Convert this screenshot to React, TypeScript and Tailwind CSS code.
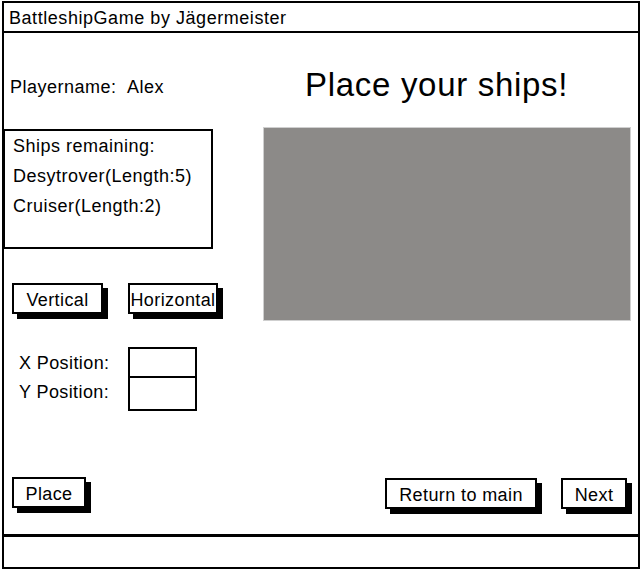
import React from "react";

const font = { fontFamily: '"Liberation Sans", Arial, sans-serif' };

function Btn({ label, w, className = "" }: { label: string; w: string; className?: string }) {
  return (
    <div
      className={`${w} shrink-0 h-[31px] border-2 border-black bg-white shadow-[5px_5px_0_0_#000] flex items-start justify-center pt-[3px] text-[18px] leading-[24px] tracking-[0.4px] text-black whitespace-nowrap ${className}`}
    >
      {label}
    </div>
  );
}

export default function App() {
  return (
    <div className="w-[644px] h-[573px] bg-white text-black" style={font}>
      <div className="ml-[2px] mt-[1px] w-[638px] h-[568px] border-2 border-black flex flex-col">
        {/* title bar */}
        <div className="h-[30px] border-b-2 border-black pl-[5px] pt-[3px] text-[18px] leading-[24px] tracking-[0.55px]">
          BattleshipGame by Jägermeister
        </div>

        {/* content */}
        <div className="flex-1 flex flex-col">
          <div className="flex">
            {/* left column */}
            <div className="w-[209px] shrink-0 flex flex-col">
              <div className="mt-[42px] pl-[6px] flex text-[18px] leading-[24px] tracking-[0.5px]">
                <span className="w-[117px]">Playername:</span>
                <span>Alex</span>
              </div>
              <div className="mt-[30px] -ml-[1px] h-[120px] border-2 border-black pl-[8px] text-[18px] leading-[30px] tracking-[0.5px]">
                <div>Ships remaining:</div>
                <div>Desytrover(Length:5)</div>
                <div>Cruiser(Length:2)</div>
              </div>
              <div className="mt-[34px] ml-[8px] flex gap-[25px]">
                <Btn label="Vertical" w="w-[91px]" />
                <Btn label="Horizontal" w="w-[90px]" />
              </div>
              <div className="mt-[33px] ml-[15px] flex">
                <div className="w-[109px] shrink-0 flex flex-col text-[18px] tracking-[0.4px]">
                  <div className="h-[30px] pt-[4px] leading-[24px]">X Position:</div>
                  <div className="h-[30px] pt-[3px] leading-[24px]">Y Position:</div>
                </div>
                <div className="flex flex-col">
                  <div className="w-[69px] h-[31px] border-2 border-black" />
                  <div className="w-[69px] h-[35px] -mt-[2px] border-2 border-black" />
                </div>
              </div>
            </div>

            {/* right column */}
            <div className="ml-[50px] w-[368px] shrink-0 flex flex-col">
              <div className="mt-[32px] pl-[42px] text-[33px] leading-[40px] tracking-[0.7px]">
                Place your ships!
              </div>
              <div className="mt-[22px] h-[194px] bg-[#8c8a88] border border-[#cfcfcf]" />
            </div>
          </div>

          {/* bottom buttons */}
          <div className="mt-auto mb-[25px] flex items-start">
            <Btn label="Place" w="w-[74px]" className="ml-[8px]" />
            <div className="flex-1" />
            <Btn label="Return to main" w="w-[152px]" className="mt-[1px]" />
            <Btn label="Next" w="w-[66px]" className="ml-[24px] mr-[11px] mt-[1px]" />
          </div>
        </div>

        {/* bottom bar */}
        <div className="h-[33px] border-t-[3px] border-black" />
      </div>
    </div>
  );
}
